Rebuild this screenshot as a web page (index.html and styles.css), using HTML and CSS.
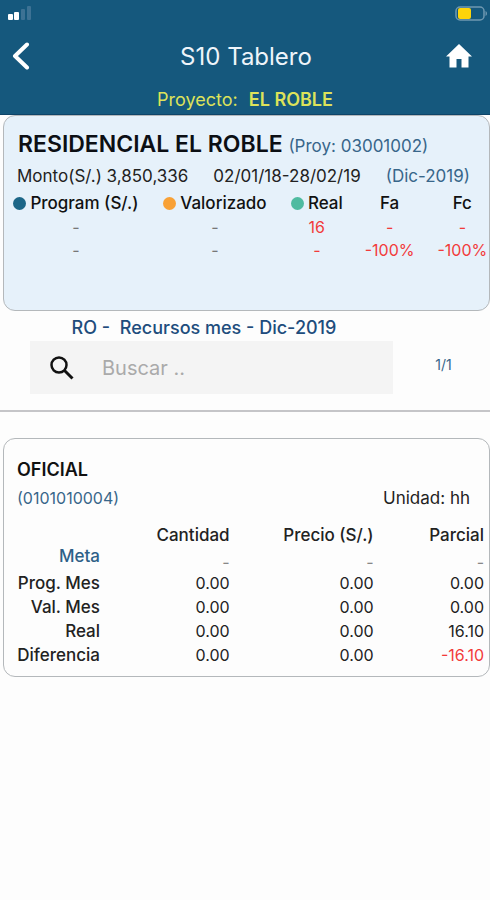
FILE: index.html
```html
<!DOCTYPE html>
<html lang="es">
<head>
    <meta charset="UTF-8">
    <meta name="viewport" content="width=device-width, initial-scale=1.0">
    <title>S10 Tablero</title>
    <link rel="stylesheet" href="styles.css">
</head>
<body>

<header class="header">
    <div class="status-bar">
        <svg class="signal" width="24" height="16" viewBox="0 0 24 16">
            <rect x="0" y="8" width="5" height="6" rx="1" fill="#fff"/>
            <rect x="6" y="6" width="5" height="8" rx="1" fill="#fff"/>
            <rect x="13" y="3" width="4" height="11" rx="1" fill="#3d7294"/>
            <rect x="19" y="0" width="4" height="14" rx="1" fill="#3d7294"/>
        </svg>
        <svg class="battery" width="33" height="16" viewBox="0 0 33 16">
            <rect x="1" y="1" width="28" height="13" rx="4" fill="none" stroke="#6f98b1" stroke-width="1.5"/>
            <rect x="3" y="2" width="13" height="11" rx="2" fill="#fdd40a"/>
            <path d="M30.5 5c2 .8 2 4.200 0 5z" fill="#6f98b1"/>
        </svg>
    </div>
    <div class="nav-bar">
        <button class="icon-btn" aria-label="Volver">
            <svg width="18" height="28" viewBox="0 0 18 28" fill="none" stroke="#fff" stroke-width="4" stroke-linecap="round" stroke-linejoin="round">
                <path d="M15 2.500 3 14l12 11.500"/>
            </svg>
        </button>
        <h1>S10 Tablero</h1>
        <button class="icon-btn" aria-label="Inicio">
            <svg width="26" height="24" viewBox="0 0 26 24" fill="#fff">
                <path d="M13 0 0 12.500h3.500V23.500h7v-8.500h5v8.500h7V12.500H26z"/>
            </svg>
        </button>
    </div>
    <p class="project">Proyecto: <strong>EL ROBLE</strong></p>
</header>

<main>
    <section class="card summary">
        <h2>RESIDENCIAL EL ROBLE <span>(Proy: 03001002)</span></h2>
        <div class="summary-info">
            <span>Monto(S/.) 3,850,336</span>
            <span>02/01/18-28/02/19</span>
            <span class="period">(Dic-2019)</span>
        </div>
        <table class="summary-table">
            <thead>
                <tr>
                    <th class="col-program"><i class="dot blue"></i>Program (S/.)</th>
                    <th class="col-valor"><i class="dot orange"></i>Valorizado</th>
                    <th class="col-real"><i class="dot green"></i>Real</th>
                    <th class="col-fa">Fa</th>
                    <th class="col-fc">Fc</th>
                </tr>
            </thead>
            <tbody>
                <tr>
                    <td>-</td>
                    <td>-</td>
                    <td class="negative">16</td>
                    <td class="negative">-</td>
                    <td class="negative">-</td>
                </tr>
                <tr>
                    <td>-</td>
                    <td>-</td>
                    <td class="negative">-</td>
                    <td class="negative">-100%</td>
                    <td class="negative">-100%</td>
                </tr>
            </tbody>
        </table>
    </section>

    <section class="filter">
        <h3>RO -&nbsp; Recursos mes - Dic-2019</h3>
        <div class="search-row">
            <div class="search-box">
                <label for="buscar" aria-label="Buscar">
                    <svg width="24" height="24" viewBox="0 0 24 24" fill="none" stroke="#111" stroke-width="2.500">
                        <circle cx="9" cy="9" r="7.500"/>
                        <path d="M14.500 14.500l8 8" stroke-width="3"/>
                    </svg>
                </label>
                <input type="text" id="buscar" placeholder="Buscar ..">
            </div>
            <span class="counter">1/1</span>
        </div>
    </section>

    <section class="card resource">
        <h4>OFICIAL</h4>
        <div class="resource-info">
            <span class="code">(0101010004)</span>
            <span class="unit">Unidad: hh</span>
        </div>
        <table class="resource-table">
            <thead>
                <tr>
                    <td class="col-label"></td>
                    <th class="col-cantidad">Cantidad</th>
                    <th class="col-precio">Precio (S/.)</th>
                    <th class="col-parcial">Parcial</th>
                </tr>
            </thead>
            <tbody>
                <tr class="meta">
                    <th>Meta</th>
                    <td>-</td>
                    <td>-</td>
                    <td>-</td>
                </tr>
                <tr>
                    <th>Prog. Mes</th>
                    <td>0.00</td>
                    <td>0.00</td>
                    <td>0.00</td>
                </tr>
                <tr>
                    <th>Val. Mes</th>
                    <td>0.00</td>
                    <td>0.00</td>
                    <td>0.00</td>
                </tr>
                <tr>
                    <th>Real</th>
                    <td>0.00</td>
                    <td>0.00</td>
                    <td>16.10</td>
                </tr>
                <tr>
                    <th>Diferencia</th>
                    <td>0.00</td>
                    <td>0.00</td>
                    <td class="negative">-16.10</td>
                </tr>
            </tbody>
        </table>
    </section>
</main>

</body>
</html>
```
FILE: styles.css
```css
* {
    box-sizing: border-box;
    margin: 0;
    padding: 0;
}
body {
    font-family: Inter, sans-serif;
    font-size: 16px;
    line-height: 24px;
    color: #222;
    background: #fdfdfd;
}

/* header */
.header {
    background: #15587d;
    height: 115px;
    border-bottom: 1px solid #0e4468;
}
.status-bar {
    display: flex;
    justify-content: space-between;
    height: 28px;
    padding: 6px 2px 0 8px;
}
.nav-bar {
    display: flex;
    justify-content: space-between;
    align-items: center;
    height: 56px;
    padding: 0 18px 0 12px;
}
.nav-bar h1 {
    padding: 2px 0 0 8px;
    color: #eef4fa;
    font-size: 24px;
    font-weight: 400;
}
.icon-btn {
    display: flex;
    width: 26px;
    background: none;
    border: none;
    cursor: pointer;
}
.project {
    color: #dde25a;
    font-size: 18px;
    line-height: 32px;
    text-align: center;
}
.project strong {
    font-weight: 600;
    margin-left: 6px;
}

/* cards */
.card {
    margin-left: 3px;
    border: 1px solid #b4b8bb;
    border-radius: 12px;
}
.summary {
    min-height: 196px;
    padding-top: 12px;
    background: #e6f1fa;
}
.summary h2 {
    padding-left: 14px;
    color: #0c0f14;
    font-size: 23px;
    line-height: 32px;
    font-weight: 600;
    white-space: nowrap;
}
.summary h2 span {
    color: #38668a;
    font-size: 17px;
    font-weight: 400;
}
.summary-info {
    display: flex;
    justify-content: space-between;
    padding: 0 19px 0 13px;
    font-size: 17px;
    line-height: 28px;
}
.summary-info .period {
    color: #38668a;
}
table {
    width: 100%;
    border-collapse: collapse;
    table-layout: fixed;
}
th {
    font-size: 17px;
    font-weight: 500;
}
.summary-table {
    text-align: center;
    white-space: nowrap;
}
.summary-table th {
    height: 26px;
    color: #111;
}
.summary-table td {
    height: 23px;
    line-height: 23px;
    color: #777;
}
.summary-table tr :first-child {
    padding-left: 8px;
}
.col-program {
    width: 28%;
}
.col-valor {
    width: 31%;
}
.col-real {
    width: 11%;
}
.col-fa {
    width: 19%;
}
.col-fc {
    width: 11%;
}
.dot {
    display: inline-block;
    width: 13px;
    height: 13px;
    margin-right: 4px;
    border-radius: 50%;
    vertical-align: -1px;
}
.blue {
    background: #1c6687;
}
.orange {
    background: #f8a136;
}
.green {
    background: #4fbba0;
}
.summary-table .negative,
.resource-table .negative {
    color: #f23b3b;
}

/* search */
.filter {
    padding: 4px 0 16px;
    border-bottom: 2px solid #c5c5c8;
}
.filter h3 {
    padding-right: 82px;
    color: #204c7c;
    font-size: 18px;
    font-weight: 500;
    line-height: 26px;
    text-align: center;
}
.search-row {
    display: flex;
    align-items: center;
    padding-left: 30px;
}
.search-box {
    display: flex;
    align-items: center;
    flex: 4;
    height: 53px;
    padding-left: 20px;
    background: #f4f4f4;
}
.search-box label {
    display: flex;
}
.search-box input {
    width: 100%;
    padding-left: 28px;
    background: none;
    border: none;
    outline: none;
    font-family: inherit;
    font-size: 20px;
}
.search-box input::placeholder {
    color: #aaa;
}
.counter {
    width: 97px;
    padding: 0 0 6px 4px;
    color: #38668a;
    font-size: 14px;
    text-align: center;
}

/* resource */
.resource {
    margin-top: 26px;
    padding: 17px 5px 9px 0;
}
.resource h4 {
    padding-left: 13px;
    color: #111;
    font-size: 18px;
    font-weight: 600;
    line-height: 28px;
}
.resource-info {
    display: flex;
    justify-content: space-between;
    padding: 0 14px 0 13px;
    line-height: 28px;
}
.resource-info .code {
    color: #38668a;
}
.resource-info .unit {
    font-size: 17px;
}
.resource-table {
    margin-top: 11px;
    text-align: right;
    white-space: nowrap;
}
.resource-table th,
.resource-table td {
    height: 24px;
    line-height: 18px;
}
.resource-table .meta th {
    color: #2d6088;
    vertical-align: top;
}
.resource-table .meta td {
    color: #888;
    vertical-align: bottom;
}
.col-label {
    width: 20%;
}
.col-cantidad {
    width: 27%;
}
.col-precio {
    width: 30%;
}
.col-parcial {
    width: 23%;
}
```
